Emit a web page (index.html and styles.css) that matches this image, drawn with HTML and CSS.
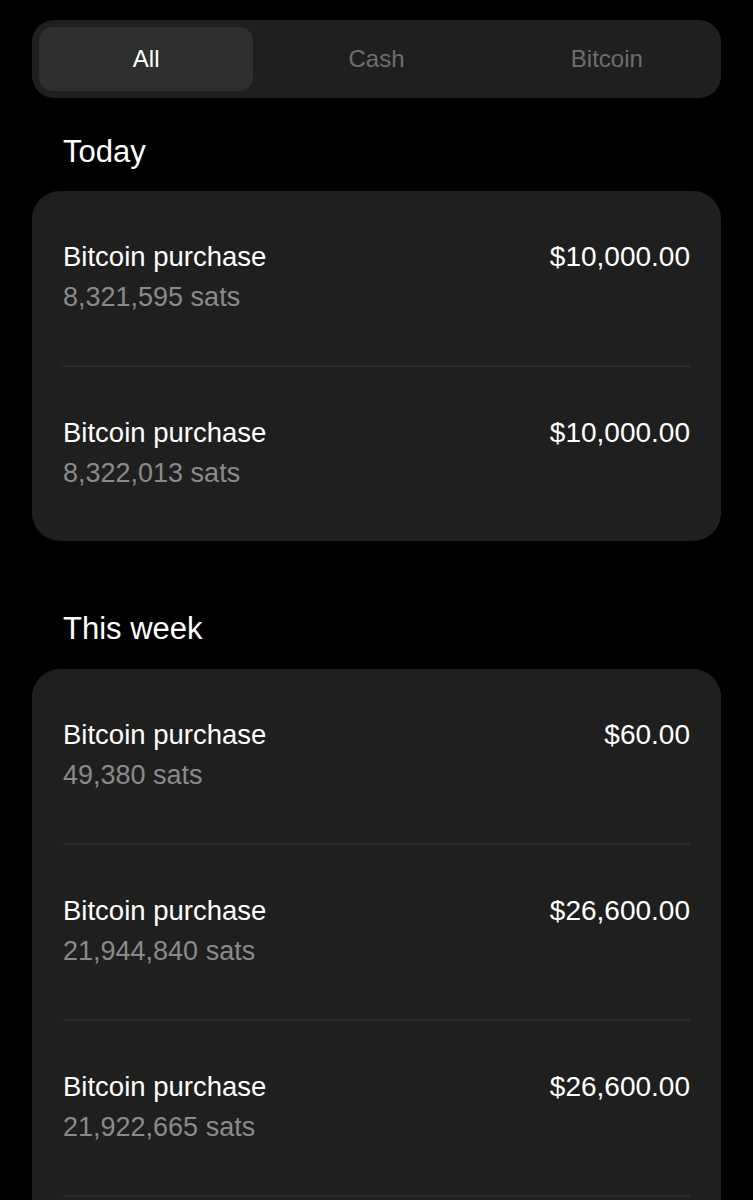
FILE: index.html
```html
<!DOCTYPE html>
<html lang="en">
<head>
<meta charset="utf-8">
<title>Activity</title>
<link rel="stylesheet" href="styles.css">
</head>
<body>
<main class="page">
  <nav class="tabs">
    <div class="tab tab-active">All</div>
    <div class="tab">Cash</div>
    <div class="tab">Bitcoin</div>
  </nav>

  <h2 class="section-title section-first">Today</h2>
  <section class="card">
    <div class="row">
      <div class="info">
        <div class="title">Bitcoin purchase</div>
        <div class="sub">8,321,595 sats</div>
      </div>
      <div class="amount">$10,000.00</div>
    </div>
    <div class="row">
      <div class="info">
        <div class="title">Bitcoin purchase</div>
        <div class="sub">8,322,013 sats</div>
      </div>
      <div class="amount">$10,000.00</div>
    </div>
  </section>

  <h2 class="section-title">This week</h2>
  <section class="card card-open">
    <div class="row">
      <div class="info">
        <div class="title">Bitcoin purchase</div>
        <div class="sub">49,380 sats</div>
      </div>
      <div class="amount">$60.00</div>
    </div>
    <div class="row">
      <div class="info">
        <div class="title">Bitcoin purchase</div>
        <div class="sub">21,944,840 sats</div>
      </div>
      <div class="amount">$26,600.00</div>
    </div>
    <div class="row">
      <div class="info">
        <div class="title">Bitcoin purchase</div>
        <div class="sub">21,922,665 sats</div>
      </div>
      <div class="amount">$26,600.00</div>
    </div>
    <div class="row-more"></div>
  </section>
</main>
</body>
</html>
```

FILE: styles.css
```css
* {
  box-sizing: border-box;
}

html, body {
  margin: 0;
  background: #000;
}

body {
  font-family: "Liberation Sans", Arial, sans-serif;
  color: #fff;
}

.page {
  padding: 20px 32px 0;
}

.tabs {
  display: grid;
  grid-template-columns: 1fr 1fr 1fr;
  column-gap: 16px;
  padding: 7px;
  height: 78px;
  background: #1f1f1f;
  border-radius: 22px;
}

.tab {
  display: flex;
  align-items: center;
  justify-content: center;
  border-radius: 14px;
  font-size: 24px;
  color: #6e6e6e;
}

.tab-active {
  background: #2f2f2f;
  color: #fff;
}

.section-title {
  margin: 69px 0 22px 31px;
  font-size: 31px;
  line-height: 37px;
  font-weight: normal;
  color: #fff;
}

.section-first {
  margin-top: 35px;
  margin-bottom: 21px;
}

.card {
  background: #1f1f1f;
  border-radius: 28px;
  padding: 0 31px;
}

.card-open {
  border-bottom-left-radius: 0;
  border-bottom-right-radius: 0;
}

.row {
  display: flex;
  justify-content: space-between;
  align-items: flex-start;
  padding: 45px 0 47px;
  border-top: 2px solid #2c2c2c;
}

.row:first-child {
  border-top: none;
}

.row-more {
  height: 60px;
  border-top: 2px solid #2c2c2c;
}

.title,
.sub,
.amount {
  font-size: 27.5px;
  line-height: 41px;
}

.title {
  color: #fff;
}

.sub {
  font-size: 27px;
  color: #8a8a8a;
}

.amount {
  font-size: 28px;
  color: #fff;
}
```
